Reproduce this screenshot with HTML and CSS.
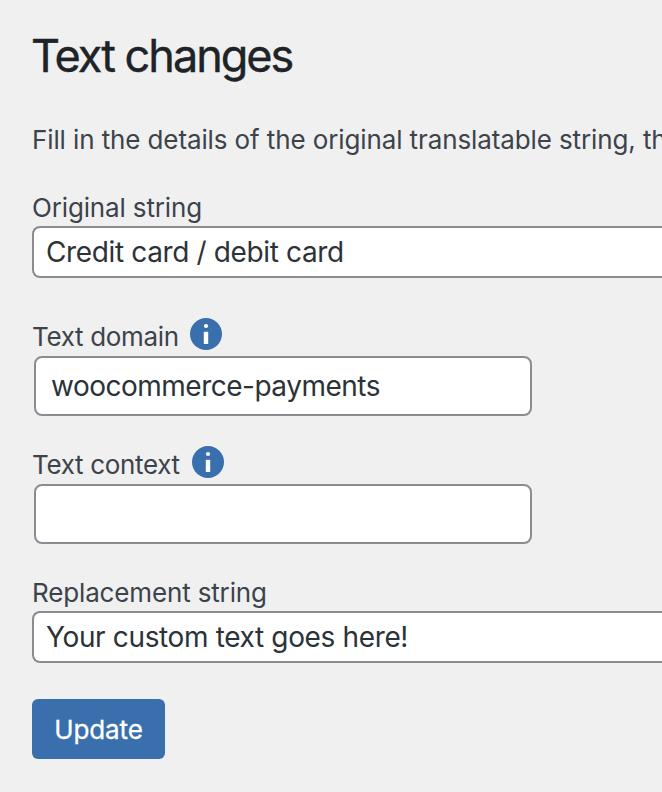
FILE: index.html
```html
<!DOCTYPE html>
<html lang="en">
<head>
    <meta charset="UTF-8">
    <meta name="viewport" content="width=device-width, initial-scale=1.0">
    <title>Text changes</title>
    <link rel="stylesheet" href="styles.css">
</head>
<body>
    <div class="wrap">
        <h1>Text changes</h1>
        <p class="intro">Fill in the details of the original translatable string, th</p>
        <form id="textChangesForm">
            <div class="form-group original">
                <label for="original">Original string</label>
                <input type="text" class="wide" id="original" name="original" value="Credit card / debit card">
            </div>
            <div class="form-group domain">
                <label for="domain">Text domain
                    <svg class="info" viewBox="0 0 32 32"><circle class="disc" cx="16" cy="16" r="16"/><circle cx="16" cy="8" r="2.1"/><path d="M13.8 13.8h4.4V26h-4.4z"/></svg>
                </label>
                <input type="text" class="regular" id="domain" name="domain" value="woocommerce-payments">
            </div>
            <div class="form-group context">
                <label for="context">Text context
                    <svg class="info" viewBox="0 0 32 32"><circle class="disc" cx="16" cy="16" r="16"/><circle cx="16" cy="8" r="2.1"/><path d="M13.8 13.8h4.4V26h-4.4z"/></svg>
                </label>
                <input type="text" class="regular" id="context" name="context">
            </div>
            <div class="form-group replacement">
                <label for="replacement">Replacement string</label>
                <input type="text" class="wide" id="replacement" name="replacement" value="Your custom text goes here!">
            </div>
            <button type="submit">Update</button>
        </form>
    </div>
</body>
</html>
```

FILE: styles.css
```css
* { box-sizing: border-box; }
body { margin: 0; background-color: #f0f0f0; color: #3c434a; font-family: Inter, "Liberation Sans", sans-serif; font-size: 26px; overflow: hidden; }
.wrap { padding: 26px 0 0 32px; overflow: hidden; }
h1 { margin: 0; height: 60px; line-height: 60px; font-size: 45px; font-weight: 400; color: #1d2327; letter-spacing: -2px; text-indent: -1px; -webkit-text-stroke: 0.4px #1d2327; }
.intro { margin: 34px 0 0; height: 40px; line-height: 40px; white-space: nowrap; letter-spacing: -0.11px; }
.form-group { display: flex; flex-direction: column; }
.original { margin-top: 30px; }
.domain { margin-top: 38px; }
.context { margin-top: 28px; }
.replacement { margin-top: 31px; }
label { display: flex; height: 36px; line-height: 36px; gap: 12px; letter-spacing: -0.15px; }
.domain label, .context label { height: 40px; line-height: 42px; letter-spacing: -0.33px; }
.domain label { gap: 11px; }
.info { width: 32px; height: 32px; margin-top: 2px; fill: #fff; }
.info .disc { fill: #3a6fad; }
input { border: 2px solid #8c8b92; border-radius: 8px; background-color: #fff; color: #2c3338; font-family: inherit; font-size: 28px; letter-spacing: -0.36px; outline: none; }
.wide { width: 100%; height: 52px; padding: 0 12px; border-right: none; border-radius: 8px 0 0 8px; }
.regular { width: 498px; height: 60px; margin-left: 2px; padding: 0 15px; letter-spacing: -0.5px; }
button { margin-top: 36px; width: 133px; height: 60px; border: none; border-radius: 6px; background-color: #3a6fad; color: #fff; font-family: inherit; font-size: 26px; letter-spacing: -0.1px; cursor: pointer; -webkit-text-stroke: 0.3px #fff; }
```
